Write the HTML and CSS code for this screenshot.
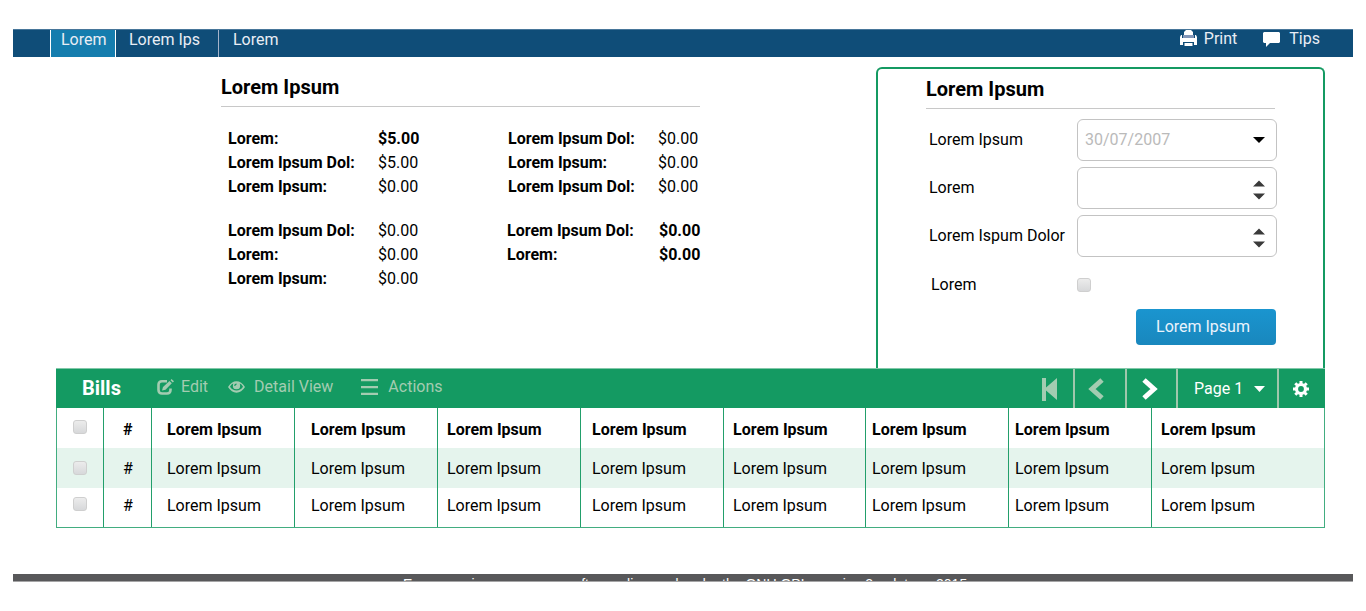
FILE: index.html
```html
<!DOCTYPE html>
<html lang="en">
<head>
<meta charset="utf-8">
<title>Bills</title>
<link rel="stylesheet" href="styles.css">
</head>
<body>
<header class="topbar">
  <nav class="tabs">
    <a class="tab tab-active">Lorem</a>
    <a class="tab tab-second">Lorem Ips</a>
    <a class="tab tab-third">Lorem</a>
  </nav>
  <div class="tools">
    <svg class="print-icon" width="17" height="17" viewBox="0 0 17 17"><path fill="#fff" d="M4 5V2l2-2h5l2 2v3zM0 7l1-2h1v3h13V5h1l1 2v8h-3v-3H3v3H0zM4.500 13h8v3h-8z"/><path fill="#8196b8" d="M3 5h11v3H3z"/></svg>
    <span class="print-label">Print</span>
    <svg class="tips-icon" width="17" height="16" viewBox="0 0 17 16"><path fill="#fff" d="M1 0h15l1 1v9l-1 1H7l-4 4v-4H1l-1-1V1z"/></svg>
    <span>Tips</span>
  </div>
</header>
<main class="content">
  <div class="upper">
    <section class="summary">
      <h2 class="heading">Lorem Ipsum</h2>
      <div class="totals">
        <b>Lorem:</b><b>$5.00</b><b>Lorem Ipsum Dol:</b><span>$0.00</span>
        <b>Lorem Ipsum Dol:</b><span>$5.00</span><b>Lorem Ipsum:</b><span>$0.00</span>
        <b>Lorem Ipsum:</b><span>$0.00</span><b>Lorem Ipsum Dol:</b><span>$0.00</span>
      </div>
      <div class="totals totals-second">
        <b>Lorem Ipsum Dol:</b><span>$0.00</span><b>Lorem Ipsum Dol:</b><b>$0.00</b>
        <b>Lorem:</b><span>$0.00</span><b>Lorem:</b><b>$0.00</b>
        <b>Lorem Ipsum:</b><span>$0.00</span>
      </div>
    </section>
    <section class="panel">
      <h2 class="heading">Lorem Ipsum</h2>
      <div class="fields">
        <span class="label">Lorem Ipsum</span>
        <div class="input"><span class="placeholder">30/07/2007</span><svg width="12" height="6" viewBox="0 0 12 6"><path d="M0 0h12L6 6z"/></svg></div>
        <span class="label">Lorem</span>
        <div class="input"><svg class="spinner" width="12" height="20" viewBox="0 0 12 20"><path fill="#3a3a3a" d="M0 6.500h12L6 .5zM0 13.500h12l-6 6z"/></svg></div>
        <span class="label">Lorem Ispum Dolor</span>
        <div class="input"><svg class="spinner" width="12" height="20" viewBox="0 0 12 20"><path fill="#3a3a3a" d="M0 6.500h12L6 .5zM0 13.500h12l-6 6z"/></svg></div>
      </div>
      <div class="check-row"><span>Lorem</span><i class="checkbox"></i></div>
      <div class="submit">Lorem Ipsum</div>
    </section>
  </div>
  <section class="bills">
    <div class="toolbar">
      <h2 class="title">Bills</h2>
      <div class="action">
        <svg width="17" height="16" viewBox="0 0 17 16"><path fill="none" stroke="#a3ccb1" stroke-width="2.600" d="M10 2.300H5Q1.500 2.300 1.500 5.500v5.500Q1.500 14.500 5 14.500h5q3.500 0 3.500-3.500V9.500"/><path fill="#a3ccb1" d="M5 11.500L6 8l6.500-6 2.300 2.300L8.500 10.800zM13.500 1.200l1-1.200L17 2.200l-1.200 1.200z"/></svg>
        <span>Edit</span>
      </div>
      <div class="action action-detail">
        <svg width="17" height="12" viewBox="0 0 17 12"><path fill="#a3ccb1" fill-rule="evenodd" d="M0 6Q3.500 .3 8.500 .3T17 6q-3.500 5.700-8.500 5.700T0 6zM5.200 2.400Q3 3.300 2 5.800 4.500 9.600 8.500 9.600T15 5.800Q14 3.300 11.800 2.400 13.300 8.300 8.500 8.300T5.200 2.400z"/><path fill="none" stroke="#149a62" stroke-width="1.200" d="M6.800 5Q6.800 3.200 8.600 3.200"/></svg>
        <span>Detail View</span>
      </div>
      <div class="action action-menu">
        <svg width="17" height="16" viewBox="0 0 17 16"><path fill="#a3ccb1" d="M0 0h17v2.200H0zM0 7h17v2.200H0zM0 13.800h17V16H0z"/></svg>
        <span>Actions</span>
      </div>
      <div class="pager">
        <div class="page-btn first"><svg width="15" height="23" viewBox="0 0 15 23"><path fill="#a3ccb1" d="M0 0h4v9.500L15 0v22L4 12.500V23H0z"/></svg></div>
        <div class="page-btn prev"><svg width="16" height="22" viewBox="0 0 16 22"><path fill="none" stroke="#a3ccb1" stroke-width="5" d="M14 2L4 11l10 9"/></svg></div>
        <div class="page-btn next"><svg width="16" height="22" viewBox="0 0 16 22"><path fill="none" stroke="#fff" stroke-width="5" d="M2 2l10 9-10 9"/></svg></div>
        <div class="page-btn page"><span>Page 1</span><svg width="11" height="6" viewBox="0 0 11 6"><path fill="#fff" d="M0 0h11L5.500 6z"/></svg></div>
        <div class="page-btn gear"><svg width="16" height="16" viewBox="0 0 16 16"><circle cx="8" cy="8" r="4.500" fill="none" stroke="#fff" stroke-width="3.200"/><path stroke="#fff" stroke-width="3" d="M8 0v3M8 13v3M0 8h3M13 8h3M2.300 2.300l2 2M11.700 11.700l2 2M2.300 13.700l2-2M11.700 4.300l2-2"/></svg></div>
      </div>
    </div>
    <div class="table">
      <div class="row row-head"><span class="pick"><i class="checkbox"></i></span><span class="num">#</span><span class="c1">Lorem Ipsum</span><span class="c2">Lorem Ipsum</span><span class="c3">Lorem Ipsum</span><span class="c4">Lorem Ipsum</span><span class="c5">Lorem Ipsum</span><span class="c6">Lorem Ipsum</span><span class="c7">Lorem Ipsum</span><span class="c8">Lorem Ipsum</span></div>
      <div class="row row-tint"><span class="pick"><i class="checkbox"></i></span><span class="num">#</span><span class="c1">Lorem Ipsum</span><span class="c2">Lorem Ipsum</span><span class="c3">Lorem Ipsum</span><span class="c4">Lorem Ipsum</span><span class="c5">Lorem Ipsum</span><span class="c6">Lorem Ipsum</span><span class="c7">Lorem Ipsum</span><span class="c8">Lorem Ipsum</span></div>
      <div class="row row-last"><span class="pick"><i class="checkbox"></i></span><span class="num">#</span><span class="c1">Lorem Ipsum</span><span class="c2">Lorem Ipsum</span><span class="c3">Lorem Ipsum</span><span class="c4">Lorem Ipsum</span><span class="c5">Lorem Ipsum</span><span class="c6">Lorem Ipsum</span><span class="c7">Lorem Ipsum</span><span class="c8">Lorem Ipsum</span></div>
    </div>
  </section>
</main>
<footer class="footer">Evergreen is open source software, licensed under the GNU GPL, version 2 or later – 2015</footer>
</body>
</html>
```
FILE: styles.css
```css
* { box-sizing: border-box; }
body { margin: 0; padding: 29px 13px 0; width: 1366px; height: 611px; overflow: hidden; background: #fff; color: #000; font: 16px/24px Roboto, sans-serif; }
svg { display: block; flex: none; }
h2 { margin: 0; font-size: 20px; font-weight: 700; }
b { font-weight: 700; }

.topbar { display: flex; justify-content: space-between; height: 28px; background: #0f4d78; border-top: 1px solid #47769a; color: #e9edf5; line-height: 19px; }
.tabs { display: flex; padding-left: 37px; }
.tab { border-left: 1px solid #fff; padding-left: 10px; }
.tab-active { width: 65px; background: #157dae; }
.tab-second { width: 103px; padding-left: 13px; }
.tab-third { padding-left: 14px; border-left-color: #a5b4cb; }
.tools { display: flex; padding-right: 33px; line-height: 17px; }
.print-icon { margin-right: 7px; }
.print-label { margin-right: 26px; }
.tips-icon { margin: 2px 9px 0 0; }

.content { padding: 10px 28px 0 43px; }
.upper { display: flex; justify-content: space-between; height: 301px; padding-left: 165px; }
.summary { width: 479px; padding-top: 8px; }
.heading { height: 32px; border-bottom: 1px solid #c8c8c8; }
.totals { display: grid; grid-template-columns: 150px 130px 150px auto; grid-auto-rows: 24px; padding: 20px 0 0 7px; white-space: nowrap; }
.totals-second { grid-template-columns: 150px 129px 152px auto; }

.panel { width: 449px; border: 2px solid #149a62; border-bottom: 0; border-radius: 6px 6px 0 0; padding: 8px 48px 0; }
.fields { display: grid; grid-template-columns: 148px 200px; grid-template-rows: 42px 42px 42px; row-gap: 6px; padding: 10px 0 0 3px; margin-right: -4px; }
.label { padding-top: 9px; white-space: nowrap; }
.input { display: flex; align-items: center; justify-content: flex-end; height: 42px; border: 1px solid #c3c3c3; border-radius: 6px; padding: 0 11px 0 7px; }
.placeholder { margin: -1px auto 0 0; color: #bababa; }
.spinner { margin-top: 3px; }
.check-row { display: flex; height: 24px; margin: 16px 0 0 5px; align-items: center; }
.check-row span { width: 146px; }
.checkbox { display: block; width: 14px; height: 14px; border: 1px solid #cfcfcf; border-radius: 3px; background: linear-gradient(#ececec, #d7d8da); }
.submit { width: 140px; height: 36px; margin: 12px 0 0 210px; padding-right: 6px; border-radius: 4px; background: linear-gradient(#1a95cf, #1987bd); color: #eaf3fc; line-height: 35px; text-align: center; }

.toolbar { display: flex; height: 40px; background: #149a62; border-top: 1px solid #82c8a9; color: #a3ccb1; }
.title { width: 101px; padding-left: 26px; color: #fff; line-height: 39px; }
.action { display: flex; align-items: center; gap: 7px; height: 36px; }
.action-detail { margin-left: 20px; gap: 9px; }
.action-menu { margin-left: 28px; gap: 10px; }
.pager { display: flex; margin-left: auto; color: #fff; }
.page-btn { display: flex; height: 39px; align-items: center; padding-top: 1px; border-right: 2px solid #a0c7ac; }
.first { padding-right: 16px; }
.prev { width: 52px; padding-left: 13px; }
.next { width: 51px; padding-left: 15px; }
.page { width: 101px; padding-left: 16px; gap: 11px; }
.gear { width: 46px; padding-left: 14px; border: 0; }

.table { border: 1px solid #42ad80; border-top: 0; }
.row { display: grid; grid-template-columns: 46px 48px 143px 143px 143px 143px 142px 143px 143px auto; height: 40px; line-height: 41px; }
.row > span { border-left: 1px solid #229f6b; }
.row > .pick { border: 0; padding: 12px 0 0 16px; }
.row-head { font-weight: 700; line-height: 43px; }
.row-tint { background: #e5f4ed; }
.row-last { height: 39px; line-height: 35px; }
.row-tint > .pick { padding-top: 13px; }
.row-last > .pick { padding-top: 9px; }
.num { padding-left: 19px; }
.c1 { padding-left: 15px; }
.c2 { padding-left: 16px; }
.c3 { padding-left: 9px; }
.c4 { padding-left: 11px; }
.c5 { padding-left: 9px; }
.c6 { padding-left: 6px; }
.c7 { padding-left: 6px; }
.c8 { padding-left: 9px; }

.footer { height: 8px; margin-top: 46px; padding: 1px 0 0 390px; overflow: hidden; border-bottom: 1px solid #a5a5a6; background: #58585a; color: #fff; font: 14px/18px "Liberation Sans", Arial, sans-serif; white-space: nowrap; }
```
